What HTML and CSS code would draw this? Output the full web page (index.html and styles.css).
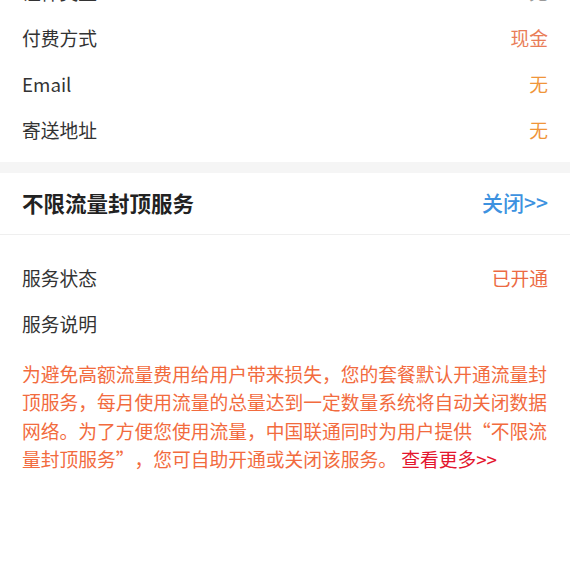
FILE: index.html
```html
<!DOCTYPE html>
<html lang="zh-CN">
<head>
<meta charset="utf-8">
<link rel="stylesheet" href="styles.css">
</head>
<body>
<div class="page">
  <section class="info">
    <div class="row row-cut"><span class="label">证件类型</span><span class="value v-gray">无</span></div>
    <div class="row"><span class="label">付费方式</span><span class="value v-salmon">现金</span></div>
    <div class="row"><span class="label">Email</span><span class="value v-orange">无</span></div>
    <div class="row"><span class="label">寄送地址</span><span class="value v-orange">无</span></div>
  </section>
  <div class="band"></div>
  <header class="head">
    <h2 class="title">不限流量封顶服务</h2>
    <a class="close">关闭&gt;&gt;</a>
  </header>
  <section class="service">
    <div class="row"><span class="label">服务状态</span><span class="value v-red">已开通</span></div>
    <div class="row"><span class="label">服务说明</span></div>
    <p class="desc">为避免高额流量费用给用户带来损失，您的套餐默认开通流量封顶服务，每月使用流量的总量达到一定数量系统将自动关闭数据网络。为了方便您使用流量，中国联通同时为用户提供<span class="q q-open">“</span>不限流量封顶服务<span class="q q-close">”</span>，您可自助开通或关闭该服务。 <a class="more">查看更多&gt;&gt;</a></p>
  </section>
</div>
</body>
</html>
```

FILE: styles.css
```css
html, body {
  margin: 0;
  padding: 0;
  background: #ffffff;
}
body {
  font-family: "Noto Sans CJK SC", "Noto Sans", sans-serif;
  color: #333333;
  overflow: hidden;
}
.page {
  width: 570px;
}
.info {
  padding: 0 22px 8px;
}
.row {
  height: 46px;
  box-sizing: border-box;
  padding-bottom: 3px;
  display: flex;
  align-items: center;
  justify-content: space-between;
  font-size: 18.75px;
}
.row-cut {
  margin-top: -30px;
}
.label {
  color: #333333;
}
.v-gray { color: #999999; }
.v-salmon { color: #e97d58; }
.v-orange { color: #f0953a; }
.v-red { color: #ec6a43; }
.band {
  height: 11px;
  background: #f5f5f5;
}
.head {
  height: 62px;
  box-sizing: border-box;
  padding: 0 22px 3px;
  display: flex;
  align-items: center;
  justify-content: space-between;
  border-bottom: 1px solid #efefef;
}
.title {
  margin: 0;
  font-size: 21.5px;
  font-weight: bold;
  color: #222222;
}
.close {
  font-size: 21px;
  font-weight: 500;
  color: #3d92e0;
}
.service {
  padding: 21px 22px 0;
}
.desc {
  margin: 12px 0 0;
  font-size: 18.75px;
  line-height: 28.3px;
  color: #f26b3e;
}
.q {
  display: inline-block;
  width: 1em;
}
.q-open {
  text-align: right;
}
.q-close {
  text-align: left;
}
.more {
  color: #e4162e;
}
```
